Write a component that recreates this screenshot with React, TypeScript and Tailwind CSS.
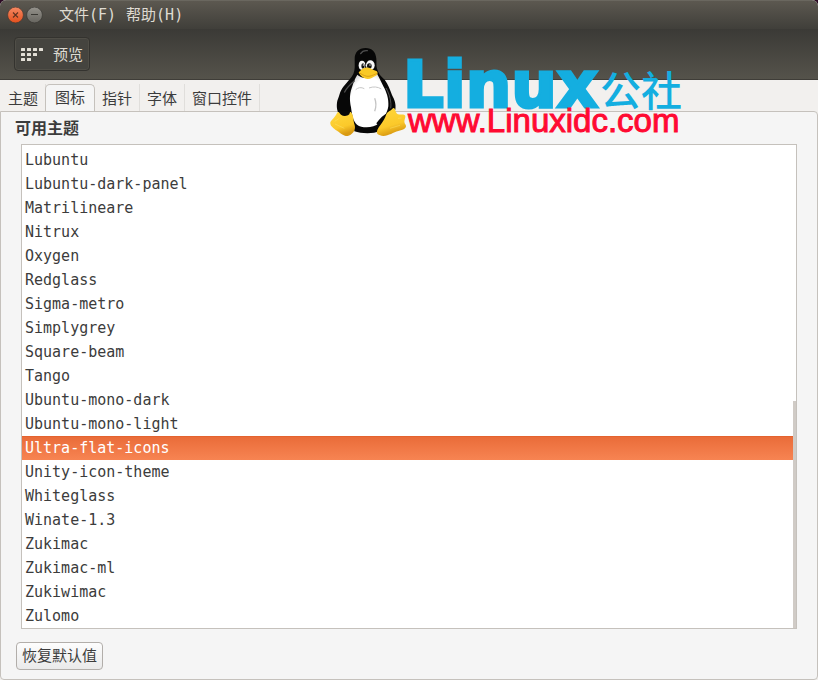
import { useState } from 'react';

const menus = ['文件(F)', '帮助(H)'];

const tabs = ['主题', '图标', '指针', '字体', '窗口控件'];

const themes = [
  'Lubuntu',
  'Lubuntu-dark-panel',
  'Matrilineare',
  'Nitrux',
  'Oxygen',
  'Redglass',
  'Sigma-metro',
  'Simplygrey',
  'Square-beam',
  'Tango',
  'Ubuntu-mono-dark',
  'Ubuntu-mono-light',
  'Ultra-flat-icons',
  'Unity-icon-theme',
  'Whiteglass',
  'Winate-1.3',
  'Zukimac',
  'Zukimac-ml',
  'Zukiwimac',
  'Zulomo',
];

function CloseIcon() {
  return (
    <svg width="17" height="17" viewBox="0 0 17 17" aria-hidden="true">
      <defs>
        <linearGradient id="close" x1="0" y1="0" x2="0" y2="1">
          <stop offset="0" stopColor="#f58963" />
          <stop offset="1" stopColor="#e4501d" />
        </linearGradient>
      </defs>
      <circle cx="8.5" cy="8" r="7.9" fill="url(#close)" stroke="#4b3a30" strokeWidth="0.7" />
      <path d="M6 5.5l5 5M11 5.5l-5 5" stroke="#5e3220" strokeWidth="1.1" />
    </svg>
  );
}

function MinimizeIcon() {
  return (
    <svg width="17" height="17" viewBox="0 0 17 17" aria-hidden="true">
      <defs>
        <linearGradient id="minimize" x1="0" y1="0" x2="0" y2="1">
          <stop offset="0" stopColor="#95938c" />
          <stop offset="1" stopColor="#67655f" />
        </linearGradient>
      </defs>
      <circle cx="8.5" cy="8" r="7.9" fill="url(#minimize)" stroke="#3a3833" strokeWidth="0.7" />
      <path d="M5 7.5h7" stroke="#3a3934" strokeWidth="1" />
    </svg>
  );
}

function PreviewIcon() {
  const rows = [4, 3, 2];
  return (
    <svg width="22" height="13" viewBox="0 0 22 13" fill="#e3dfd6" aria-hidden="true">
      {rows.map((count, row) =>
        Array.from({ length: count }, (_, col) => (
          <rect key={`${row}-${col}`} x={col * 6} y={row * 5} width="4" height="3" rx="0.5" />
        ))
      )}
    </svg>
  );
}

function Penguin() {
  return (
    <g transform="scale(0.33333)">
      <defs>
        <linearGradient id="foot" x1="0" y1="0" x2="0.3" y2="1">
          <stop offset="0" stopColor="#ffd83d" />
          <stop offset="0.7" stopColor="#fbc92a" />
          <stop offset="1" stopColor="#d99a12" />
        </linearGradient>
        <radialGradient id="belly" cx="0.5" cy="0.55" r="0.6">
          <stop offset="0.8" stopColor="#ffffff" />
          <stop offset="1" stopColor="#d8d8d8" />
        </radialGradient>
      </defs>
      <path
        d="M122 12C101 12 89 25 89 45C89 62 91 76 85 90C78 104 66 114 55 128C44 142 44 154 37 170C34 184 35 201 43 211L80 214L88 262C108 270 148 270 162 262L188 212L211 197C214 180 208 166 201 153C195 136 189 121 179 107C168 97 160 89 156 74C153 64 155 55 154 44C152 23 141 12 122 12Z"
        fill="#070707"
      />
      <path
        d="M97 92C89 104 84 119 80 133C73 154 74 171 78 190C81 213 84 232 96 242C112 254 146 252 162 238C176 226 187 206 190 187C192 164 184 143 175 127C168 112 162 100 156 89C144 99 128 104 115 101C107 99 102 96 97 92Z"
        fill="url(#belly)"
      />
      <path d="M92 137C100 130 109 129 118 134M132 132C145 127 158 128 169 135" fill="none" stroke="#c6c6c6" strokeWidth="3" />
      <path d="M149 163C154 175 154 188 149 202" fill="none" stroke="#c4c4c4" strokeWidth="4" />
      <path d="M183 132C194 151 200 175 197 193" fill="none" stroke="#777777" strokeWidth="2" />
      <path d="M154 238C165 222 176 214 190 205L185 227L160 245Z" fill="#070707" />
      <path d="M59 144C67 128 78 119 88 111M107 29C111 22 120 19 127 20" fill="none" stroke="#4c4c4c" strokeWidth="4" strokeLinecap="round" />
      <ellipse cx="111" cy="64" rx="10" ry="14" fill="#f8f8f8" />
      <ellipse cx="136" cy="64" rx="13" ry="15" fill="#f8f8f8" />
      <ellipse cx="114" cy="66" rx="5" ry="8" fill="#111111" />
      <ellipse cx="133" cy="66" rx="7" ry="8" fill="#111111" />
      <circle cx="115" cy="63" r="2" fill="#ffffff" />
      <circle cx="135" cy="63" r="2" fill="#ffffff" />
      <path
        d="M101 85C107 79 112 72 121 71C132 69 142 77 154 81C161 85 157 94 151 96C143 99 138 105 128 105C115 104 105 95 101 85Z"
        fill="#f9c927"
      />
      <path d="M104 87C115 94 123 98 132 97C142 95 149 91 157 88" fill="none" stroke="#cd8e12" strokeWidth="2" />
      <path
        d="M16 235C20 226 31 220 36 207C42 198 48 212 59 213C69 215 72 200 78 205C87 214 84 230 89 243C94 260 80 273 68 276C56 277 45 265 31 257C22 250 15 245 16 235Z"
        fill="url(#foot)"
      />
      <path
        d="M157 258C165 242 176 234 184 211C188 202 195 203 204 193C211 187 210 207 219 211C229 213 242 209 241 219C239 228 236 233 241 241C249 253 233 258 220 261C205 265 192 275 175 276C160 274 152 270 157 258Z"
        fill="url(#foot)"
      />
      <path d="M41 200C44 216 62 220 73 211L76 200Z" fill="#070707" />
      <path d="M29 232L43 223M30 240L58 253M219 223L229 222M195 253L225 244" stroke="#ffea78" strokeWidth="2" opacity="0.6" />
    </g>
  );
}

function SiteLogo() {
  return (
    <svg
      className="pointer-events-none absolute left-[325px] top-11"
      width="360"
      height="96"
      viewBox="0 0 360 96"
      role="img"
      aria-label="Linux公社 www.Linuxidc.com"
    >
      <Penguin />
      <text
        x="78"
        y="63"
        className="fill-[#14aee0] stroke-[#14aee0] stroke-3 font-['DejaVu_Sans',sans-serif] text-[64px] font-bold"
      >
        Linux
      </text>
      <text x="275" y="62" className="fill-[#14aee0] font-['Noto_Sans_CJK_SC',sans-serif] text-[41px] font-medium">
        公社
      </text>
      <text
        x="83"
        y="88"
        className="fill-[#ff0a32] stroke-[#ff0a32] stroke-1 font-['Liberation_Sans',sans-serif] text-[33px]"
      >
        www.Linuxidc.com
      </text>
    </svg>
  );
}

export default function App() {
  const [activeTab, setActiveTab] = useState('图标');
  const [selected, setSelected] = useState('Ultra-flat-icons');

  return (
    <div className="relative min-h-screen bg-[#2c0a24] font-['DejaVu_Sans_Mono','Noto_Sans_CJK_SC',monospace] text-[15px] leading-6 text-[#3c3c3c]">
      <div className="flex min-h-screen flex-col overflow-hidden rounded-t-md bg-[#f2f0ee]">
        <header className="text-[#dfdbd2]">
          <div className="flex h-[29px] items-center border-t border-[#6a675f] bg-linear-to-b from-[#5c5850] to-[#403f3a] pl-[7px]">
            <div className="flex gap-[2px]">
              <button type="button" aria-label="关闭">
                <CloseIcon />
              </button>
              <button type="button" aria-label="最小化">
                <MinimizeIcon />
              </button>
            </div>
            <nav className="ml-4 flex gap-[10px] pb-px">
              {menus.map((menu) => (
                <button key={menu} type="button">
                  {menu}
                </button>
              ))}
            </nav>
          </div>
          <div className="flex h-[51px] items-center border-b border-[#3f3d38] bg-linear-to-b from-[#3b3a36] to-[#55534b] px-[14px]">
            <button
              type="button"
              className="flex h-[34px] items-center gap-[10px] rounded border border-[#34332f] bg-[#45443f] px-[6px] shadow-[inset_0_0_0_1px_#504e47]"
            >
              <PreviewIcon />
              <span className="pt-[2px]">预览</span>
            </button>
          </div>
        </header>

        <div role="tablist" className="-mb-px flex items-end pl-px pt-1">
          {tabs.map((tab) => (
            <button
              key={tab}
              type="button"
              role="tab"
              aria-selected={tab === activeTab}
              onClick={() => setActiveTab(tab)}
              className={
                tab === activeTab
                  ? '-ml-px h-7 rounded-t-[5px] border border-b-0 border-[#c5c1bc] bg-[#f5f5f5] px-[9px] pb-[2px]'
                  : 'h-7 border-r border-[#e0dedb] px-[7px] pt-[2px]'
              }
            >
              {tab}
            </button>
          ))}
        </div>

        <main className="flex flex-1 flex-col rounded-b rounded-tr border border-[#c5c1bc] bg-[#f5f5f5] pb-[9px] pl-[14px] pr-5">
          <h1 id="themes-label" className="mt-[5px] text-[16px] font-bold">
            可用主题
          </h1>
          <div className="ml-[6px] mt-[3px] flex flex-1 border border-[#c5c1bc] bg-white">
            <ul role="listbox" aria-labelledby="themes-label" className="flex-1 pt-[3px]">
              {themes.map((theme) => (
                <li key={theme} role="presentation">
                  <button
                    type="button"
                    role="option"
                    aria-selected={theme === selected}
                    onClick={() => setSelected(theme)}
                    className={`block h-6 w-full px-[3px] text-left ${
                      theme === selected
                        ? 'bg-linear-to-b from-[#e96b38] to-[#f78452] text-white shadow-[inset_0_1px_0_#e4632f]'
                        : ''
                    }`}
                  >
                    {theme}
                  </button>
                </li>
              ))}
            </ul>
            <div className="flex w-[3px] flex-col justify-end">
              <div className="h-[47%] bg-[#d0cbc6]" />
            </div>
          </div>
          <button
            type="button"
            className="ml-px mt-[13px] h-7 self-start rounded border border-[#b2aeaa] bg-linear-to-b from-[#fdfdfd] to-[#eaeaea] px-[5px]"
          >
            恢复默认值
          </button>
        </main>
      </div>
      <SiteLogo />
    </div>
  );
}
